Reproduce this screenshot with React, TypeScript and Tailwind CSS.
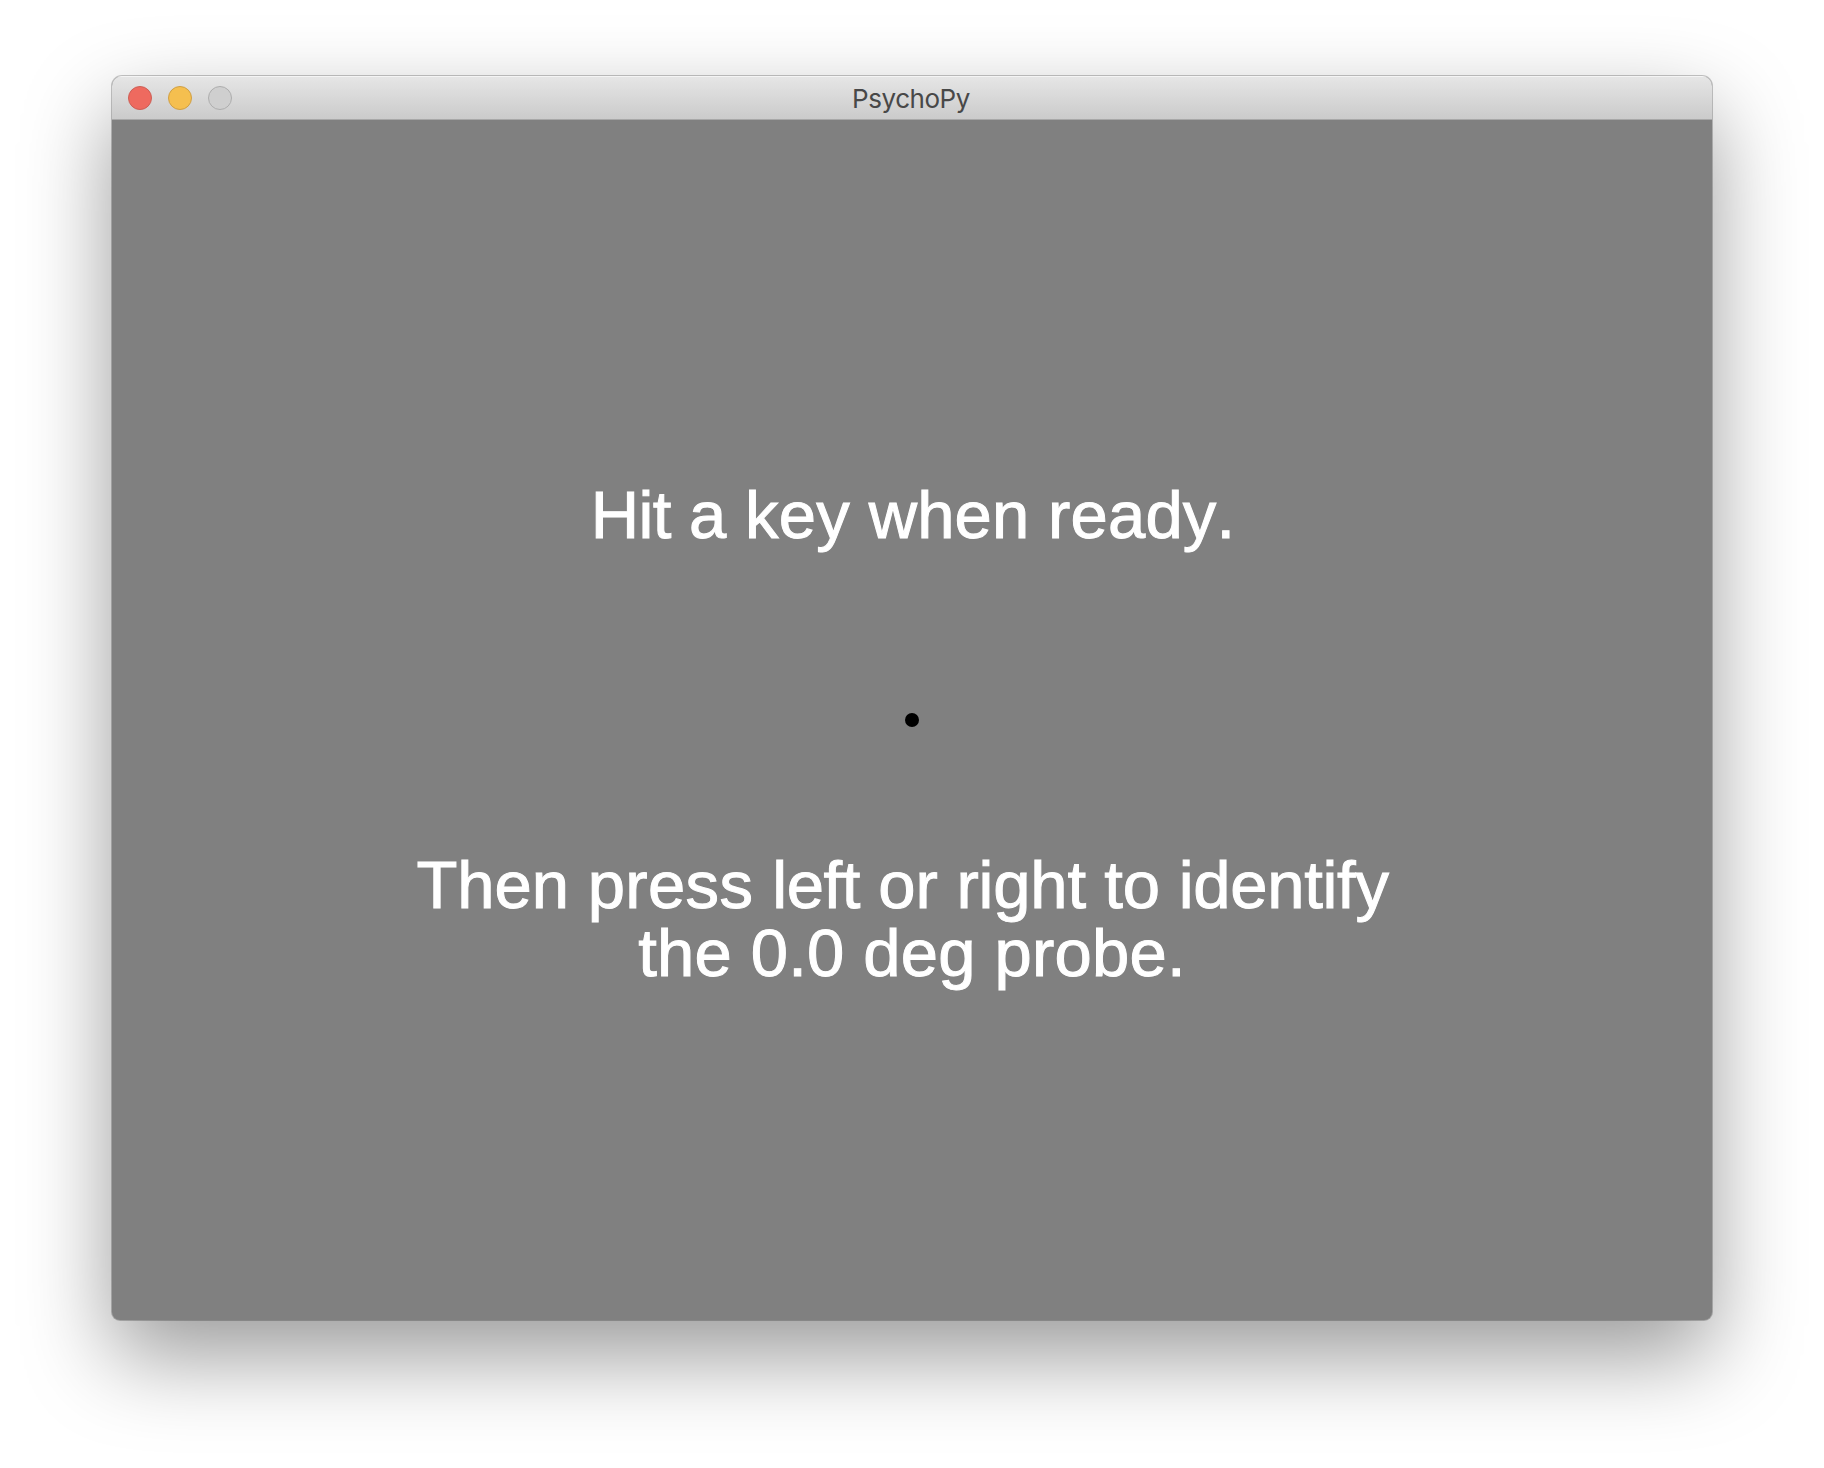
export default function App() {
  return (
    <div className="flex h-[1468px] w-[1824px] justify-center bg-white pt-[76px] font-['Liberation_Sans',sans-serif]">
      <div className="flex h-[1244px] w-[1600px] flex-col overflow-hidden rounded-t-[10px] rounded-b-[8px] bg-[#808080] shadow-[0_0_0_1px_rgba(0,0,0,0.22),0_36px_88px_rgba(0,0,0,0.4)]">
        <header className="grid h-11 shrink-0 grid-cols-[1fr_auto_1fr] items-center border-b border-[#a8a8a8] bg-linear-to-b from-[#e6e6e6] to-[#cbcbcb] px-4 shadow-[inset_0_1px_0_#f4f4f4]">
          <div className="flex gap-4">
            <span className="size-6 rounded-full border border-[#cc5f56] bg-[#ee6a5f]" />
            <span className="size-6 rounded-full border border-[#cf9f45] bg-[#f5bf4f]" />
            <span className="size-6 rounded-full border border-[#adadad] bg-[#cfcfcf]" />
          </div>
          <h1 className="pt-0.5 pr-0.5 font-[Inter,sans-serif] text-[26px] leading-8 tracking-[-0.45px] text-[#484848]">PsychoPy</h1>
        </header>
        <main className="flex flex-col items-center text-[67px] leading-[68px] text-white [-webkit-text-stroke:1px_white]">
          <p className="mt-[361px] pl-0.5 whitespace-pre">
            <span className="tracking-[-0.6px]">Hit </span>
            <span className="tracking-[0.1px]">a </span>
            <span className="tracking-[0.2px]">key </span>
            <span className="tracking-[0.1px]">when </span>
            <span className="tracking-[0.2px]">ready</span>
            <span>.</span>
          </p>
          <div className="mt-[164px] size-[14px] rounded-full bg-black" />
          <p className="mt-[124px] pr-[19px] whitespace-pre">
            <span>Then </span>
            <span className="tracking-[0.35px]">press </span>
            <span className="tracking-[-0.4px]">left </span>
            <span>or </span>
            <span className="tracking-[-0.2px]">right </span>
            <span>to </span>
            <span className="tracking-[-0.3px]">identify</span>
          </p>
          <p className="tracking-[0.2px]">the 0.0 deg probe.</p>
        </main>
      </div>
    </div>
  );
}
